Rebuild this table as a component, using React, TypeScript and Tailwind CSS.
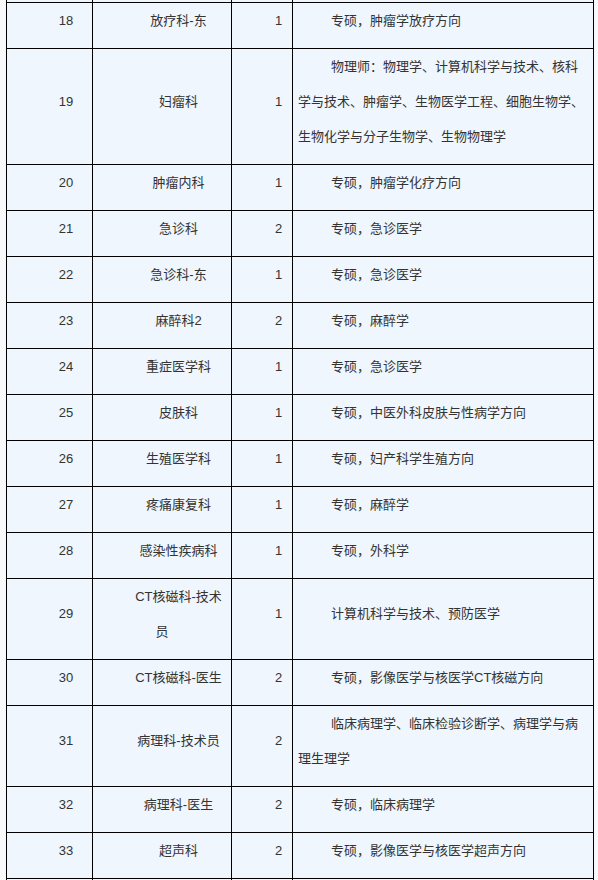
const rows: [string, string, string, string][] = [
  ["18", "放疗科-东", "1", "专硕，肿瘤学放疗方向"],
  ["19", "妇瘤科", "1", "物理师：物理学、计算机科学与技术、核科学与技术、肿瘤学、生物医学工程、细胞生物学、生物化学与分子生物学、生物物理学"],
  ["20", "肿瘤内科", "1", "专硕，肿瘤学化疗方向"],
  ["21", "急诊科", "2", "专硕，急诊医学"],
  ["22", "急诊科-东", "1", "专硕，急诊医学"],
  ["23", "麻醉科2", "2", "专硕，麻醉学"],
  ["24", "重症医学科", "1", "专硕，急诊医学"],
  ["25", "皮肤科", "1", "专硕，中医外科皮肤与性病学方向"],
  ["26", "生殖医学科", "1", "专硕，妇产科学生殖方向"],
  ["27", "疼痛康复科", "1", "专硕，麻醉学"],
  ["28", "感染性疾病科", "1", "专硕，外科学"],
  ["29", "CT核磁科-技术员", "1", "计算机科学与技术、预防医学"],
  ["30", "CT核磁科-医生", "2", "专硕，影像医学与核医学CT核磁方向"],
  ["31", "病理科-技术员", "2", "临床病理学、临床检验诊断学、病理学与病理生理学"],
  ["32", "病理科-医生", "2", "专硕，临床病理学"],
  ["33", "超声科", "2", "专硕，影像医学与核医学超声方向"],
]

const cell = "border border-black px-[5px] pt-0 pb-[10px] leading-[35px] indent-[33px] align-middle"

export default function App() {
  return (
    <div className="min-h-[880px] bg-[#f8f9fb] font-['Liberation_Sans','Noto_Sans_CJK_SC',sans-serif] text-[13px] text-[#333]">
      <table className="ml-[6px] w-[587px] table-fixed border-collapse bg-[#eff6fd]">
        <colgroup>
          <col className="w-[86px]" />
          <col className="w-[139px]" />
          <col className="w-[61px]" />
          <col className="w-[301px]" />
        </colgroup>
        <tbody>
          {/* tail of the previous row, scrolled off */}
          <tr className="h-[2px]">
            <td className="border border-t-0 border-black p-0" />
            <td className="border border-t-0 border-black p-0" />
            <td className="border border-t-0 border-black p-0" />
            <td className="border border-t-0 border-black p-0" />
          </tr>
          {rows.map(([no, dept, count, major]) => (
            <tr key={no}>
              <td className={`${cell} text-center`}>{no}</td>
              <td className={`${cell} text-center`}>{dept}</td>
              <td className={`${cell} text-center`}>{count}</td>
              <td className={`${cell} text-left`}>{major}</td>
            </tr>
          ))}
          <tr>
            <td className={cell}>&nbsp;</td>
            <td className={cell}>&nbsp;</td>
            <td className={cell}>&nbsp;</td>
            <td className={cell}>&nbsp;</td>
          </tr>
        </tbody>
      </table>
    </div>
  )
}
